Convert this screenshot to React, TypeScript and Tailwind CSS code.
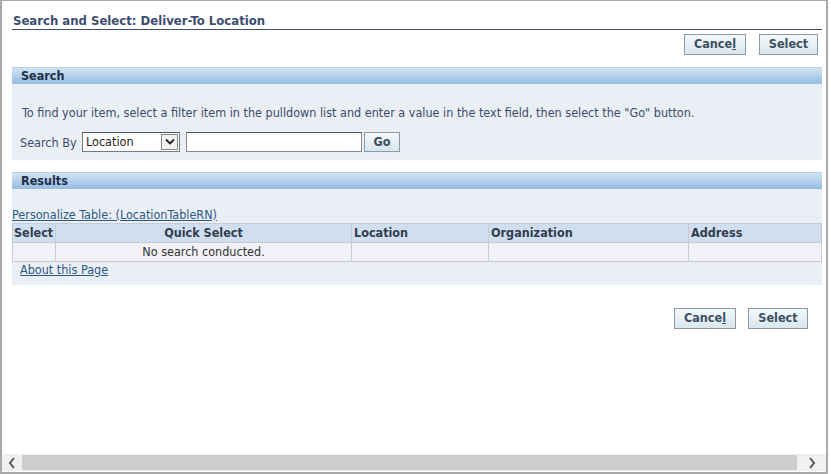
const font = { fontFamily: '"DejaVu Sans Condensed", "DejaVu Sans", sans-serif' };

const Btn = ({ children, w }: { children: React.ReactNode; w: string }) => (
  <button
    className={`${w} h-[21px] border border-[#8b9aa5] bg-gradient-to-b from-[#f4f8fa] to-[#d9e6ee] text-[12.5px] font-bold text-[#3b4f63] leading-none`}
  >
    {children}
  </button>
);

const CancelLabel = () => (
  <span>
    Cance<span className="underline">l</span>
  </span>
);

const SectionHeader = ({ title }: { title: string }) => (
  <div className="h-[17px] bg-gradient-to-b from-[#d3e4f4] to-[#94bce2] border-t border-[#b8cfe4] pl-[9px] text-[12.5px] font-bold text-[#233047] leading-[16px]">
    {title}
  </div>
);

export default function App() {
  return (
    <div className="w-[831px] h-[474px] bg-white" style={font}>
      <div className="w-[828px] h-[474px] border-t border-l-2 border-r-2 border-b-2 border-[#a9a9a9] flex flex-col">
        <div className="flex-1 pl-[10px] pr-[4px]">
          {/* Title */}
          <div className="mt-[12px] h-[17px] border-b border-[#3f4d6b] text-[13px] font-bold text-[#3c4e70] leading-[15px] pl-[1px]">
            Search and Select: Deliver-To Location
          </div>
          <div className="flex justify-end gap-[13px] mt-[4px] pr-[4px]">
            <Btn w="w-[62px]">
              <CancelLabel />
            </Btn>
            <Btn w="w-[59px]">Select</Btn>
          </div>

          {/* Search */}
          <div className="mt-[12px]">
            <SectionHeader title="Search" />
            <div className="h-[76px] bg-[#eaeef5] pl-[10px] text-[12.5px] text-[#3c4d6a]">
              <div className="pt-[21px] leading-[16px]">
                To find your item, select a filter item in the pulldown list and enter a value in the text field, then select the "Go" button.
              </div>
              <div className="flex items-center mt-[10px]">
                <span className="ml-[-2px] w-[62px] mt-[3px]">Search By</span>
                <div className="w-[98px] h-[20px] bg-white border border-[#7a7a7a] border-t-[#555] flex items-center text-[12.5px] text-[#222]">
                  <span className="flex-1 pl-[3px]">Location</span>
                  <span className="w-[17px] h-[16px] mr-[1px] border border-[#888] bg-[#f2f2f2] flex items-center justify-center">
                    <svg width="10" height="7" viewBox="0 0 10 7">
                      <path d="M1 1.5 L5 5.5 L9 1.5" stroke="#222" strokeWidth="1.8" fill="none" />
                    </svg>
                  </span>
                </div>
                <div className="ml-[6px] w-[176px] h-[20px] bg-white border border-[#8a8a8a] border-t-[#555]" />
                <button className="ml-[2px] h-[20px] w-[36px] border border-[#8b9aa5] bg-gradient-to-b from-[#f4f8fa] to-[#d9e6ee] text-[12.5px] font-bold text-[#3b4f63] leading-none">
                  Go
                </button>
              </div>
            </div>
          </div>

          {/* Results */}
          <div className="mt-[12px]">
            <SectionHeader title="Results" />
            <div className="h-[96px] bg-[#eaeef5] text-[12.5px]">
              <div className="pt-[18px] leading-[16px] text-[#2c5a86] underline">
                Personalize Table: (LocationTableRN)
              </div>
              <table className="w-full border-collapse border border-[#c5ccd4] text-[12.5px]">
                <thead>
                  <tr className="bg-[#cfdff0] text-[#323d4f] font-bold h-[19px] leading-[16px]">
                    <th className="w-[43px] text-left pl-[1px] border-r border-[#c5ccd4]">Select</th>
                    <th className="w-[296px] text-center border-r border-[#c5ccd4]">Quick Select</th>
                    <th className="w-[137px] text-left pl-[2px] border-r border-[#c5ccd4]">Location</th>
                    <th className="w-[200px] text-left pl-[2px] border-r border-[#c5ccd4]">Organization</th>
                    <th className="text-left pl-[2px]">Address</th>
                  </tr>
                </thead>
                <tbody>
                  <tr className="bg-[#f2f2f6] h-[19px] text-[#333] border-t border-[#c5ccd4] leading-[16px]">
                    <td className="border-r border-[#c5ccd4]" />
                    <td className="text-center border-r border-[#c5ccd4]">No search conducted.</td>
                    <td className="border-r border-[#c5ccd4]" />
                    <td className="border-r border-[#c5ccd4]" />
                    <td />
                  </tr>
                </tbody>
              </table>
              <div className="pl-[8px] leading-[16px] text-[#2c5a86] underline">About this Page</div>
            </div>
          </div>

          <div className="flex justify-end gap-[12px] mt-[23px] pr-[14px]">
            <Btn w="w-[62px]">
              <CancelLabel />
            </Btn>
            <Btn w="w-[60px]">Select</Btn>
          </div>
        </div>

        {/* Scrollbar */}
        <div className="h-[17px] mb-[1px] bg-[#f0f0f0] flex items-center">
          <div className="w-[20px] flex justify-center">
            <svg width="8" height="12" viewBox="0 0 8 12">
              <path d="M6 1 L2 6 L6 11" stroke="#555" strokeWidth="2" fill="none" />
            </svg>
          </div>
          <div className="flex-1 h-[15px] bg-[#cdcdcd]" />
          <div className="w-[29px] flex justify-center">
            <svg width="8" height="12" viewBox="0 0 8 12">
              <path d="M2 1 L6 6 L2 11" stroke="#555" strokeWidth="2" fill="none" />
            </svg>
          </div>
        </div>
      </div>
    </div>
  );
}
